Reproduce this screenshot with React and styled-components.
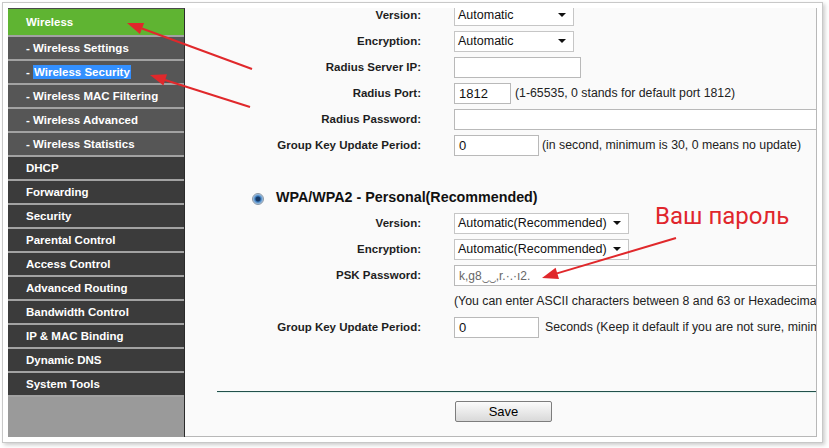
import React from 'react';
import styled, { createGlobalStyle } from 'styled-components';

const menu = [
    { label: 'Wireless', kind: 'active' },
    { label: '- Wireless Settings', kind: 'sub' },
    { label: '- ', kind: 'sub', selected: 'Wireless Security' },
    { label: '- Wireless MAC Filtering', kind: 'sub' },
    { label: '- Wireless Advanced', kind: 'sub' },
    { label: '- Wireless Statistics', kind: 'sub' },
    { label: 'DHCP', kind: 'main' },
    { label: 'Forwarding', kind: 'main' },
    { label: 'Security', kind: 'main' },
    { label: 'Parental Control', kind: 'main' },
    { label: 'Access Control', kind: 'main' },
    { label: 'Advanced Routing', kind: 'main' },
    { label: 'Bandwidth Control', kind: 'main' },
    { label: 'IP & MAC Binding', kind: 'main' },
    { label: 'Dynamic DNS', kind: 'main' },
    { label: 'System Tools', kind: 'main' },
];

const App = () => {
    return (
        <Page>
            <GlobalStyle />
            <Frame>
                <Panel>
                    <Sidebar>
                        {menu.map((item, i) => (
                            <MenuItem key={i} $kind={item.kind}>
                                {item.label}
                                {item.selected && <Selected>{item.selected}</Selected>}
                            </MenuItem>
                        ))}
                    </Sidebar>
                    <Content>
                        <Form>
                            <Row>
                                <Label>Version:</Label>
                                <Field>
                                    <Select $w={120}>Automatic<Caret /></Select>
                                </Field>
                            </Row>
                            <Row>
                                <Label>Encryption:</Label>
                                <Field>
                                    <Select $w={120}>Automatic<Caret /></Select>
                                </Field>
                            </Row>
                            <Row>
                                <Label>Radius Server IP:</Label>
                                <Field>
                                    <TextBox $w={127} />
                                </Field>
                            </Row>
                            <Row>
                                <Label>Radius Port:</Label>
                                <Field>
                                    <TextBox $w={57}>1812</TextBox>
                                    <Hint $gap={4}>(1-65535, 0 stands for default port 1812)</Hint>
                                </Field>
                            </Row>
                            <Row>
                                <Label>Radius Password:</Label>
                                <Field>
                                    <TextBox $w={420} />
                                </Field>
                            </Row>
                            <Row>
                                <Label>Group Key Update Period:</Label>
                                <Field>
                                    <TextBox $w={85}>0</TextBox>
                                    <Hint $gap={3}>(in second, minimum is 30, 0 means no update)</Hint>
                                </Field>
                            </Row>
                            <Row />
                            <Heading>
                                <Radio />
                                WPA/WPA2 - Personal(Recommended)
                            </Heading>
                            <Row>
                                <Label>Version:</Label>
                                <Field>
                                    <Select $w={175}>Automatic(Recommended)<Caret /></Select>
                                </Field>
                            </Row>
                            <Row>
                                <Label>Encryption:</Label>
                                <Field>
                                    <Select $w={175}>Automatic(Recommended)<Caret /></Select>
                                </Field>
                            </Row>
                            <Row>
                                <Label>PSK Password:</Label>
                                <Field>
                                    <TextBox $w={420}><Blurred>k,g8‿‿,r.·.·ı2.</Blurred></TextBox>
                                </Field>
                            </Row>
                            <Row>
                                <Label />
                                <Field>
                                    <Hint $gap={0}>(You can enter ASCII characters between 8 and 63 or Hexadecimal characters between 8 and 64.)</Hint>
                                </Field>
                            </Row>
                            <Row>
                                <Label>Group Key Update Period:</Label>
                                <Field>
                                    <TextBox $w={85}>0</TextBox>
                                    <Hint $gap={6}>Seconds (Keep it default if you are not sure, minimum is 30, 0 means no update)</Hint>
                                </Field>
                            </Row>
                        </Form>
                        <Rule />
                        <SaveButton>Save</SaveButton>
                    </Content>
                </Panel>
            </Frame>
            <Note>Ваш пароль</Note>
            <Arrows width="829" height="448" viewBox="0 0 829 448">
                <g stroke="#e0282b" strokeWidth="2" fill="#e0282b">
                    <line x1="252" y1="69" x2="142" y2="28.5" />
                    <polygon stroke="none" points="127,23 144.1,22.9 139.9,34.1" />
                    <line x1="250" y1="107" x2="165" y2="80" />
                    <polygon stroke="none" points="150,75 167,74.2 163.4,85.6" />
                    <line x1="676" y1="238" x2="557" y2="273.4" />
                    <polygon stroke="none" points="542,278 559,279.1 555.6,267.7" />
                </g>
            </Arrows>
        </Page>
    );
}

const GlobalStyle = createGlobalStyle`
    html, body {
        margin: 0;
        padding: 0;
        background: #fff;
    }
    body {
        font-family: "Liberation Sans", Arial, sans-serif;
    }
`;

const Page = styled.div`
    position: relative;
    width: 829px;
    height: 448px;
    overflow: hidden;
`;

const Frame = styled.div`
    box-sizing: border-box;
    margin: 2px 0 0 2px;
    width: 821px;
    height: 441px;
    padding: 5px;
    border: 1px solid #c8c8c8;
    background: #fff;
    box-shadow: 2px 2px 4px rgba(0, 0, 0, 0.2);
`;

const Panel = styled.div`
    display: flex;
    height: 100%;
`;

const Sidebar = styled.div`
    box-sizing: border-box;
    width: 177px;
    flex-shrink: 0;
    display: flex;
    flex-direction: column;
    background: #9a9a9a;
    border-top: 1px solid #4a4a4a;
    border-right: 1px solid #2b2b2b;
`;

const itemColors = {
    active: '#5fb432',
    sub: '#565656',
    main: '#3b3b3b',
};

const MenuItem = styled.div`
    display: flex;
    align-items: center;
    height: ${({ $kind }) => ($kind === 'active' ? '26px' : '22px')};
    padding-left: 18px;
    border-bottom: 2px solid #a2a2a2;
    background: ${({ $kind }) => itemColors[$kind]};
    color: #fff;
    font-size: 11.5px;
    font-weight: bold;
    white-space: pre;
`;

const Selected = styled.span`
    background: #3390ff;
    padding: 1px 1px;
`;

const Content = styled.div`
    flex: 1;
    min-width: 0;
    display: flex;
    flex-direction: column;
    background: #fafafa;
    border-right: 1px solid #b8b8b8;
    border-bottom: 1px solid #b8b8b8;
    overflow: hidden;
`;

const Form = styled.div`
    margin-top: -6px;
    display: flex;
    flex-direction: column;
`;

const Row = styled.div`
    display: grid;
    grid-template-columns: 236px 1fr;
    column-gap: 33px;
    align-items: center;
    height: 26px;
`;

const Label = styled.div`
    text-align: right;
    font-size: 11.5px;
    font-weight: bold;
    color: #1e1e1e;
    white-space: nowrap;
`;

const Field = styled.div`
    display: flex;
    align-items: center;
    min-width: 0;
    overflow: hidden;
    white-space: nowrap;
`;

const Select = styled.div`
    box-sizing: border-box;
    display: flex;
    align-items: center;
    flex-shrink: 0;
    width: ${({ $w }) => $w}px;
    height: 21px;
    padding-left: 3px;
    border: 1px solid #c6c6c6;
    background: #fff;
    font-size: 12.5px;
    color: #111;
`;

const Caret = styled.span`
    margin-left: auto;
    margin-right: 7px;
    width: 0;
    height: 0;
    border-left: 4px solid transparent;
    border-right: 4px solid transparent;
    border-top: 4px solid #111;
`;

const TextBox = styled.div`
    box-sizing: border-box;
    display: flex;
    align-items: center;
    flex-shrink: 0;
    width: ${({ $w }) => $w}px;
    height: 21px;
    padding-left: 4px;
    border: 1px solid #b9b9b9;
    background: #fff;
    font-size: 13px;
    color: #111;
`;

const Blurred = styled.span`
    color: #666;
    font-size: 12px;
`;

const Hint = styled.span`
    margin-left: ${({ $gap }) => $gap}px;
    font-size: 12.3px;
    color: #222;
`;

const Heading = styled.div`
    display: flex;
    align-items: center;
    gap: 12px;
    height: 26px;
    padding-left: 67px;
    font-size: 14.3px;
    font-weight: bold;
    color: #111;
`;

const Radio = styled.span`
    box-sizing: border-box;
    width: 12px;
    height: 12px;
    margin-top: 4px;
    border-radius: 50%;
    border: 1px solid #8a97a5;
    background: radial-gradient(circle, #173a66 0 2px, #3f7fc0 3px, #a9c8e6 5px, #e8eef5 6px);
`;

const Rule = styled.div`
    margin: 51px 0 0 32px;
    height: 1px;
    background: #23504b;
    border-bottom: 1px solid #e2f2ee;
`;

const SaveButton = styled.button`
    box-sizing: border-box;
    margin: 8px 0 0 270px;
    width: 97px;
    height: 21px;
    padding: 0;
    border: 1px solid #7d7d7d;
    border-radius: 2px;
    background: linear-gradient(#fbfbfb, #d9d9d9);
    font-family: "Liberation Sans", Arial, sans-serif;
    font-size: 13px;
    color: #000;
`;

const Note = styled.div`
    position: absolute;
    left: 655px;
    top: 204px;
    font-family: Roboto, "Liberation Sans", sans-serif;
    font-size: 24px;
    line-height: 24px;
    color: #e0262c;
`;

const Arrows = styled.svg`
    position: absolute;
    top: 0;
    left: 0;
    pointer-events: none;
`;

export default App;
